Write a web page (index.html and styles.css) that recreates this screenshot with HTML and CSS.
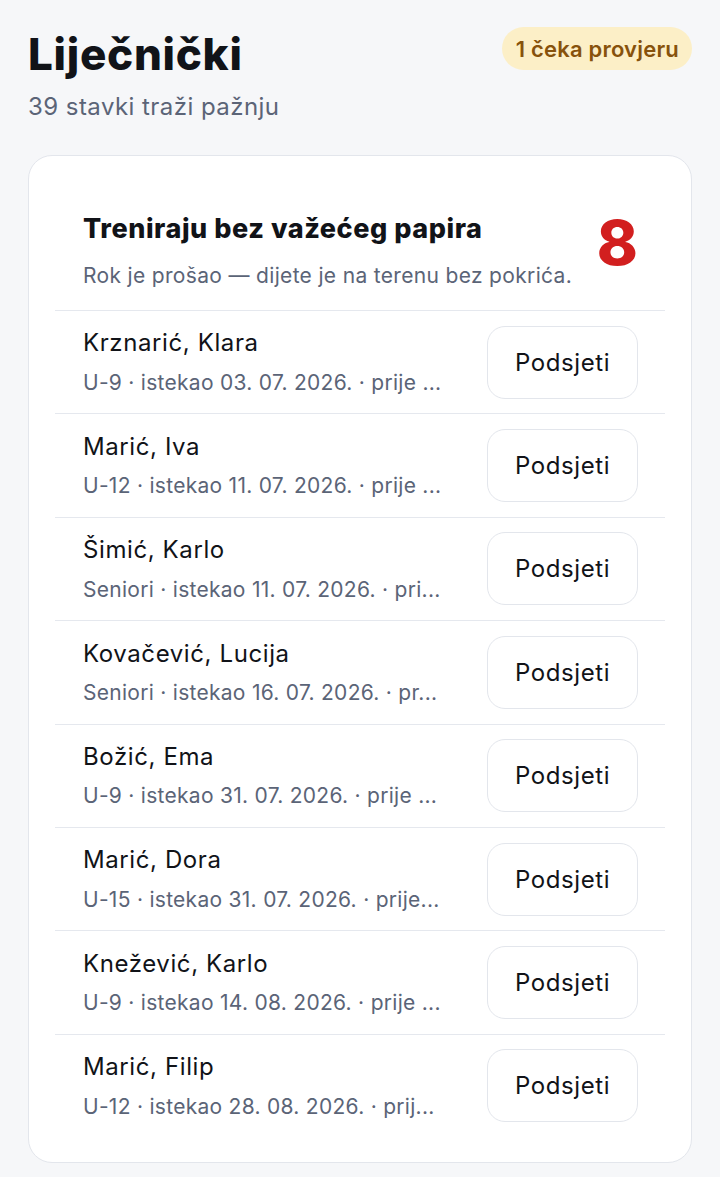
FILE: index.html
```html
<!DOCTYPE html>
<html lang="hr">
<head>
<meta charset="utf-8">
<title>Liječnički</title>
<link rel="stylesheet" href="styles.css">
</head>
<body>
<main class="page">
  <header class="top">
    <div class="top-text">
      <h1 class="title">Liječnički</h1>
      <p class="subtitle">39 stavki traži pažnju</p>
    </div>
    <span class="badge">1 čeka provjeru</span>
  </header>

  <section class="card">
    <div class="card-head">
      <div class="head-text">
        <h2 class="head-title">Treniraju bez važećeg papira</h2>
        <p class="head-sub">Rok je prošao — dijete je na terenu bez pokrića.</p>
      </div>
      <span class="count">8</span>
    </div>
    <ul class="list">
      <li class="row"><div class="info"><div class="name">Krznarić, Klara</div><div class="meta">U-9 · istekao 03. 07. 2026. · prije ...</div></div><button class="btn">Podsjeti</button></li>
      <li class="row"><div class="info"><div class="name">Marić, Iva</div><div class="meta">U-12 · istekao 11. 07. 2026. · prije ...</div></div><button class="btn">Podsjeti</button></li>
      <li class="row"><div class="info"><div class="name">Šimić, Karlo</div><div class="meta">Seniori · istekao 11. 07. 2026. · pri...</div></div><button class="btn">Podsjeti</button></li>
      <li class="row"><div class="info"><div class="name">Kovačević, Lucija</div><div class="meta">Seniori · istekao 16. 07. 2026. · pr...</div></div><button class="btn">Podsjeti</button></li>
      <li class="row"><div class="info"><div class="name">Božić, Ema</div><div class="meta">U-9 · istekao 31. 07. 2026. · prije ...</div></div><button class="btn">Podsjeti</button></li>
      <li class="row"><div class="info"><div class="name">Marić, Dora</div><div class="meta">U-15 · istekao 31. 07. 2026. · prije...</div></div><button class="btn">Podsjeti</button></li>
      <li class="row"><div class="info"><div class="name">Knežević, Karlo</div><div class="meta">U-9 · istekao 14. 08. 2026. · prije ...</div></div><button class="btn">Podsjeti</button></li>
      <li class="row"><div class="info"><div class="name">Marić, Filip</div><div class="meta">U-12 · istekao 28. 08. 2026. · prij...</div></div><button class="btn">Podsjeti</button></li>
    </ul>
  </section>
</main>
</body>
</html>
```
FILE: styles.css
```css
* { box-sizing: border-box; }
html, body { margin: 0; padding: 0; }
body {
  background: #f6f7f9;
  font-family: Inter, "Noto Sans", sans-serif;
  color: #111827;
}
.page {
  padding: 27px 28px 15px;
}
.top {
  display: flex;
  justify-content: space-between;
  align-items: flex-start;
}
.title {
  margin: 0;
  font-size: 44px;
  line-height: 54px;
  font-weight: 800;
  letter-spacing: 0.7px;
  color: #111318;
}
.subtitle {
  margin: 11px 0 0;
  font-size: 24px;
  line-height: 30px;
  letter-spacing: 0.45px;
  color: #5b6477;
}
.badge {
  background: #fcefc7;
  color: #87520c;
  font-size: 22px;
  font-weight: 600;
  letter-spacing: 0.2px;
  line-height: 24px;
  padding: 9.5px 13px 9.5px 14px;
  border-radius: 999px;
}
.card {
  margin-top: 33px;
  background: #fff;
  border: 1px solid #e3e6ec;
  border-radius: 24px;
  padding: 27px 26px 25px;
}
.card-head {
  display: flex;
  justify-content: space-between;
  align-items: flex-start;
  padding: 29px 27px 21px 28px;
  border-bottom: 1px solid #e5e8ee;
}
.head-title {
  margin: 0;
  font-size: 27px;
  line-height: 34px;
  font-weight: 800;
  letter-spacing: 0.55px;
  color: #111318;
}
.head-sub {
  margin: 17px 0 0;
  font-size: 21px;
  line-height: 26px;
  letter-spacing: 0.33px;
  color: #5b6477;
}
.count {
  font-size: 62px;
  line-height: 62px;
  font-weight: 800;
  color: #d21f1f;
  margin-top: 0;
}
.list {
  list-style: none;
  margin: 0;
  padding: 0;
}
.row {
  display: flex;
  align-items: center;
  gap: 44px;
  padding: 14.7px 27px 14.7px 28px;
  border-bottom: 1px solid #e5e8ee;
}
.row:last-child { border-bottom: none; }
.info {
  flex: 1;
  min-width: 0;
}
.name {
  font-size: 24px;
  line-height: 30px;
  letter-spacing: 0.6px;
  color: #111318;
}
.meta {
  margin-top: 11.5px;
  font-size: 21px;
  line-height: 26px;
  letter-spacing: 0.28px;
  color: #5b6477;
  white-space: nowrap;
}
.btn {
  flex: none;
  width: 151px;
  height: 73px;
  padding: 0;
  background: #fff;
  border: 1px solid #e3e6ec;
  border-radius: 18px;
  font-family: inherit;
  font-size: 24px;
  letter-spacing: 0.6px;
  color: #111318;
}
```
